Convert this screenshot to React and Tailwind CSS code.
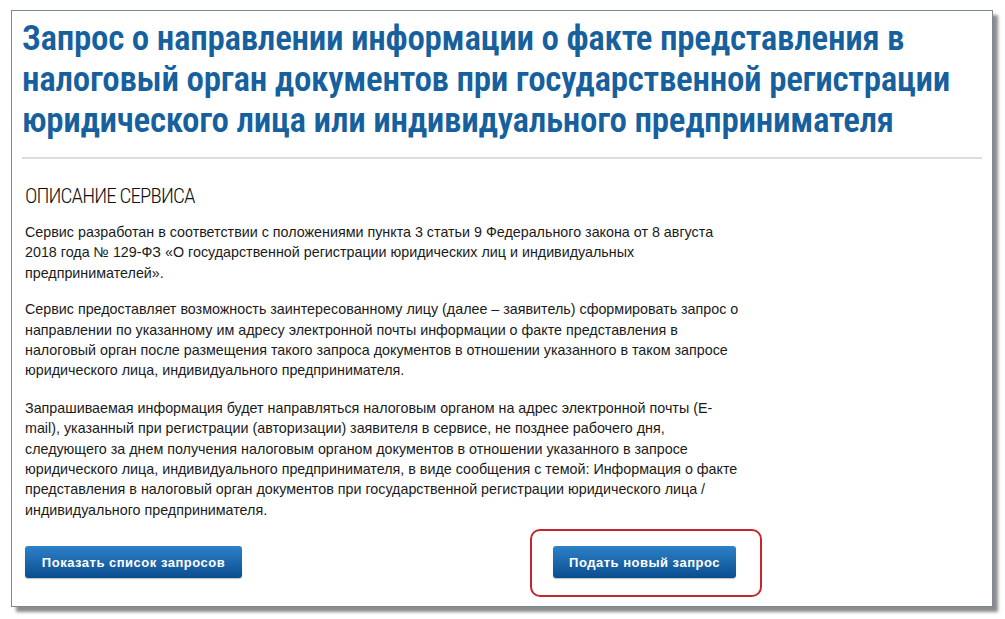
export default function App() {
  return (
    <div className="min-h-screen bg-white pt-[10px] pl-[11px]">
      <div className="w-[982px] h-[597px] border border-[#7d8893] bg-white shadow-[5px_5px_3px_rgba(0,0,0,0.45)] px-[10px]">
        <h1 className="pt-[7px] text-[35px] leading-[41px] font-semibold text-[#16609e] whitespace-nowrap tracking-[-0.3px]"
          style={{ fontFamily: "Roboto, sans-serif", fontStretch: '75%' }}>
          Запрос о направлении информации о факте представления в<br />
          налоговый орган документов при государственной регистрации<br />
          юридического лица или индивидуального предпринимателя
        </h1>
        <div className="mt-[16px] h-[2px] bg-[#dddddd]" />
        <div className="px-[3px]" style={{ fontFamily: "'Liberation Sans', Arial, sans-serif" }}>
          <h2 className="mt-[24px] text-[21px] leading-[26px] text-[#111] uppercase tracking-[-0.9px]"
            style={{ fontFamily: "Roboto, sans-serif", fontStretch: '75%', fontWeight: 300 }}>
            Описание сервиса
          </h2>
          <div className="mt-[13px] text-[14.3px] leading-[20.4px] text-[#1a1a1a] whitespace-nowrap">
            <p>
              Сервис разработан в соответствии с положениями пункта 3 статьи 9 Федерального закона от 8 августа<br />
              2018 года № 129-ФЗ «О государственной регистрации юридических лиц и индивидуальных<br />
              предпринимателей».
            </p>
            <p className="mt-[16px]">
              Сервис предоставляет возможность заинтересованному лицу (далее – заявитель) сформировать запрос о<br />
              направлении по указанному им адресу электронной почты информации о факте представления в<br />
              налоговый орган после размещения такого запроса документов в отношении указанного в таком запросе<br />
              юридического лица, индивидуального предпринимателя.
            </p>
            <p className="mt-[17px]">
              Запрашиваемая информация будет направляться налоговым органом на адрес электронной почты (E-<br />
              mail), указанный при регистрации (авторизации) заявителя в сервисе, не позднее рабочего дня,<br />
              следующего за днем получения налоговым органом документов в отношении указанного в запросе<br />
              юридического лица, индивидуального предпринимателя, в виде сообщения с темой: Информация о факте<br />
              представления в налоговый орган документов при государственной регистрации юридического лица /<br />
              индивидуального предпринимателя.
            </p>
          </div>
          <div className="mt-[9px] flex items-start">
            <button className="mt-[17px] w-[217px] h-[32px] rounded-[3px] bg-gradient-to-b from-[#2d82c9] to-[#0a4d8f] text-white text-[13px] font-bold tracking-[0.5px] shadow-[0_1px_1px_rgba(0,0,0,0.25)]">
              Показать список запросов
            </button>
            <div className="ml-[288px] w-[232px] h-[68px] rounded-[10px] border-2 border-[#c3262c] pl-[21px] pt-[15px]">
              <button className="w-[183px] h-[32px] rounded-[3px] bg-gradient-to-b from-[#2d82c9] to-[#0a4d8f] text-white text-[13px] font-bold tracking-[0.5px] shadow-[0_1px_1px_rgba(0,0,0,0.25)]">
                Подать новый запрос
              </button>
            </div>
          </div>
        </div>
      </div>
    </div>
  )
}
